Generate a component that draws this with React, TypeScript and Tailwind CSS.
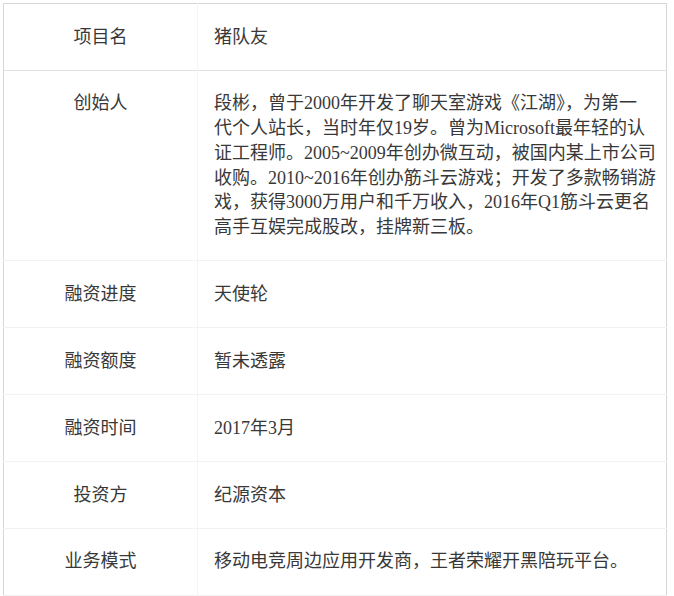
const founder = [
  '段彬，曾于2000年开发了聊天室游戏《江湖》，为第一',
  '代个人站长，当时年仅19岁。曾为Microsoft最年轻的认',
  '证工程师。2005~2009年创办微互动，被国内某上市公司',
  '收购。2010~2016年创办筋斗云游戏；开发了多款畅销游',
  '戏，获得3000万用户和千万收入，2016年Q1筋斗云更名',
  '高手互娱完成股改，挂牌新三板。',
];

const rows: { label: string; value: string | string[] }[] = [
  { label: '项目名', value: '猪队友' },
  { label: '创始人', value: founder },
  { label: '融资进度', value: '天使轮' },
  { label: '融资额度', value: '暂未透露' },
  { label: '融资时间', value: '2017年3月' },
  { label: '投资方', value: '纪源资本' },
  { label: '业务模式', value: '移动电竞周边应用开发商，王者荣耀开黑陪玩平台。' },
];

export default function App() {
  return (
    <div className="min-h-screen bg-white pt-[3px] pl-[3px]">
      <table
        className="w-[664px] border-collapse border border-[#d6d6d6] text-[18px] leading-[24.7px] text-[#383838]"
        style={{ fontFamily: '"Liberation Serif", "Noto Sans CJK SC", serif' }}
      >
        <tbody>
          {rows.map((r, i) => (
            <tr
              key={r.label}
              className={i === 0 ? 'border-b border-[#e2e2e2]' : 'border-b border-[#f2f2f2]'}
            >
              <td className="w-[194px] border-r border-[#f4f4f4] py-[20.6px] text-center align-top">
                {r.label}
              </td>
              <td className="py-[20.6px] pl-[16px] pr-[8px] align-top">
                {Array.isArray(r.value)
                  ? r.value.map((line) => (
                      <div key={line} className="whitespace-nowrap">
                        {line}
                      </div>
                    ))
                  : r.value}
              </td>
            </tr>
          ))}
        </tbody>
      </table>
    </div>
  );
}
